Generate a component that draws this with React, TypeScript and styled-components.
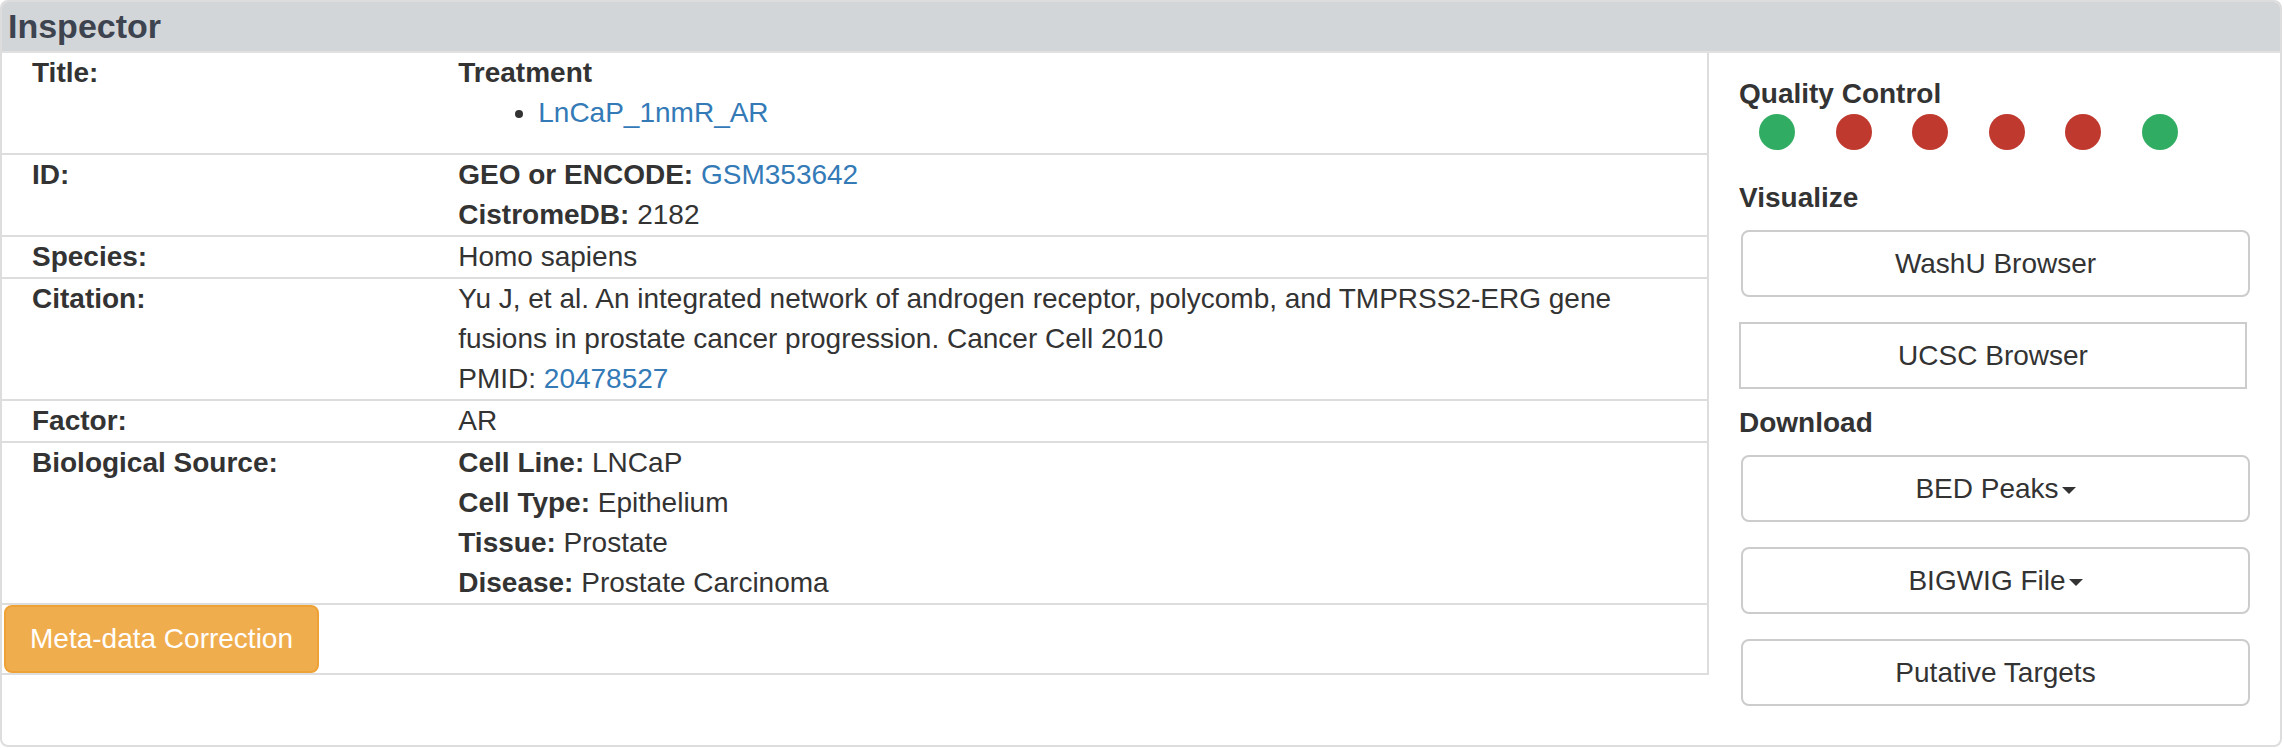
import React from "react";
import styled, { createGlobalStyle } from "styled-components";

const GlobalStyle = createGlobalStyle`
  html, body { margin: 0; padding: 0; background: #ffffff; }
  body {
    font-family: "Liberation Sans", Arial, Helvetica, sans-serif;
    font-size: 28px;
    line-height: 40px;
    color: #333333;
  }
  * { box-sizing: border-box; }
`;

const Panel = styled.section`
  width: 2282px;
  height: 747px;
  border: 2px solid #dddddd;
  border-radius: 8px;
  display: flex;
  flex-direction: column;
  overflow: hidden;
  background: #ffffff;
`;

const Heading = styled.header`
  flex: none;
  height: 51px;
  background: #d2d6d9;
  border-bottom: 2px solid #e1e1e1;
  padding-left: 6px;
`;

const HeadingTitle = styled.h3`
  margin: 0;
  font-size: 34px;
  line-height: 49px;
  font-weight: bold;
  color: #3d4450;
`;

const Body = styled.div`
  flex: 1;
  display: flex;
  align-items: flex-start;
`;

const MetaTable = styled.div`
  flex: none;
  width: 1707px;
  border-right: 2px solid #dddddd;
`;

const Row = styled.div`
  display: grid;
  grid-template-columns: 25% 75%;
  border-bottom: 2px solid #dddddd;
`;

const LabelCell = styled.div`
  padding: 0 30px;
  font-weight: bold;
`;

const ValueCell = styled.div`
  padding: 0 30px;
`;

const Key = styled.strong`
  font-weight: bold;
`;

const Link = styled.a`
  color: #337ab7;
  text-decoration: none;
`;

const TitleList = styled.ul`
  margin: 0 0 20px;
  padding-left: 80px;
`;

const ButtonRow = styled.div`
  display: flex;
  padding-left: 2px;
  border-bottom: 2px solid #dddddd;
`;

const WarningButton = styled.button`
  height: 68px;
  padding: 0 24px;
  border: 2px solid #eea236;
  border-radius: 8px;
  background: #f0ad4e;
  color: #ffffff;
  font-family: inherit;
  font-size: 28px;
  line-height: 40px;
`;

const Side = styled.aside`
  flex: 1;
  padding: 21px 30px 0;
  display: flex;
  flex-direction: column;
`;

const SideTitle = styled.h4<{ $mt?: number }>`
  margin: ${(p) => p.$mt ?? 0}px 0 0;
  font-size: 28px;
  line-height: 40px;
  font-weight: bold;
  color: #333333;
`;

const Dots = styled.div`
  display: flex;
  gap: 40.6px;
  padding-left: 20px;
  margin-top: 0;
  height: 36px;
`;

const Dot = styled.span<{ $ok: boolean }>`
  width: 36px;
  height: 36px;
  border-radius: 50%;
  background: ${(p) => (p.$ok ? "#31ad63" : "#c0392f")};
`;

const Stack = styled.div`
  display: flex;
  flex-direction: column;
  gap: 25px;
  margin-top: 12px;
`;

const ActionButton = styled.button<{ $square?: boolean }>`
  height: 67px;
  display: flex;
  align-items: center;
  justify-content: center;
  border: 2px solid #cccccc;
  border-radius: ${(p) => (p.$square ? 0 : 8)}px;
  margin: ${(p) => (p.$square ? "0 3px 0 0" : "0 0 0 2px")};
  background: #ffffff;
  color: #333333;
  font-family: inherit;
  font-size: 28px;
  line-height: 40px;
  padding: 0 24px;
`;

const Caret = styled.span`
  display: inline-block;
  width: 0;
  height: 0;
  margin-left: 3px;
  margin-top: 4px;
  border-top: 7px solid #333333;
  border-left: 7px solid transparent;
  border-right: 7px solid transparent;
`;

const qc = [true, false, false, false, false, true];

export default function App() {
  return (
    <>
      <GlobalStyle />
      <Panel>
        <Heading>
          <HeadingTitle>Inspector</HeadingTitle>
        </Heading>
        <Body>
          <MetaTable>
            <Row>
              <LabelCell>Title:</LabelCell>
              <ValueCell>
                <Key>Treatment</Key>
                <TitleList>
                  <li>
                    <Link href="#">LnCaP_1nmR_AR</Link>
                  </li>
                </TitleList>
              </ValueCell>
            </Row>
            <Row>
              <LabelCell>ID:</LabelCell>
              <ValueCell>
                <div>
                  <Key>GEO or ENCODE:</Key> <Link href="#">GSM353642</Link>
                </div>
                <div>
                  <Key>CistromeDB:</Key> 2182
                </div>
              </ValueCell>
            </Row>
            <Row>
              <LabelCell>Species:</LabelCell>
              <ValueCell>Homo sapiens</ValueCell>
            </Row>
            <Row>
              <LabelCell>Citation:</LabelCell>
              <ValueCell>
                <div>
                  Yu J, et al. An integrated network of androgen receptor, polycomb, and TMPRSS2-ERG gene
                  <br />
                  fusions in prostate cancer progression. Cancer Cell 2010
                </div>
                <div>
                  PMID: <Link href="#">20478527</Link>
                </div>
              </ValueCell>
            </Row>
            <Row>
              <LabelCell>Factor:</LabelCell>
              <ValueCell>AR</ValueCell>
            </Row>
            <Row>
              <LabelCell>Biological Source:</LabelCell>
              <ValueCell>
                <div>
                  <Key>Cell Line:</Key> LNCaP
                </div>
                <div>
                  <Key>Cell Type:</Key> Epithelium
                </div>
                <div>
                  <Key>Tissue:</Key> Prostate
                </div>
                <div>
                  <Key>Disease:</Key> Prostate Carcinoma
                </div>
              </ValueCell>
            </Row>
            <ButtonRow>
              <WarningButton>Meta-data Correction</WarningButton>
            </ButtonRow>
          </MetaTable>
          <Side>
            <SideTitle>Quality Control</SideTitle>
            <Dots>
              {qc.map((ok, i) => (
                <Dot key={i} $ok={ok} />
              ))}
            </Dots>
            <SideTitle $mt={28}>Visualize</SideTitle>
            <Stack>
              <ActionButton>WashU Browser</ActionButton>
              <ActionButton $square>UCSC Browser</ActionButton>
            </Stack>
            <SideTitle $mt={14}>Download</SideTitle>
            <Stack>
              <ActionButton>
                BED Peaks
                <Caret />
              </ActionButton>
              <ActionButton>
                BIGWIG File
                <Caret />
              </ActionButton>
              <ActionButton>Putative Targets</ActionButton>
            </Stack>
          </Side>
        </Body>
      </Panel>
    </>
  );
}
